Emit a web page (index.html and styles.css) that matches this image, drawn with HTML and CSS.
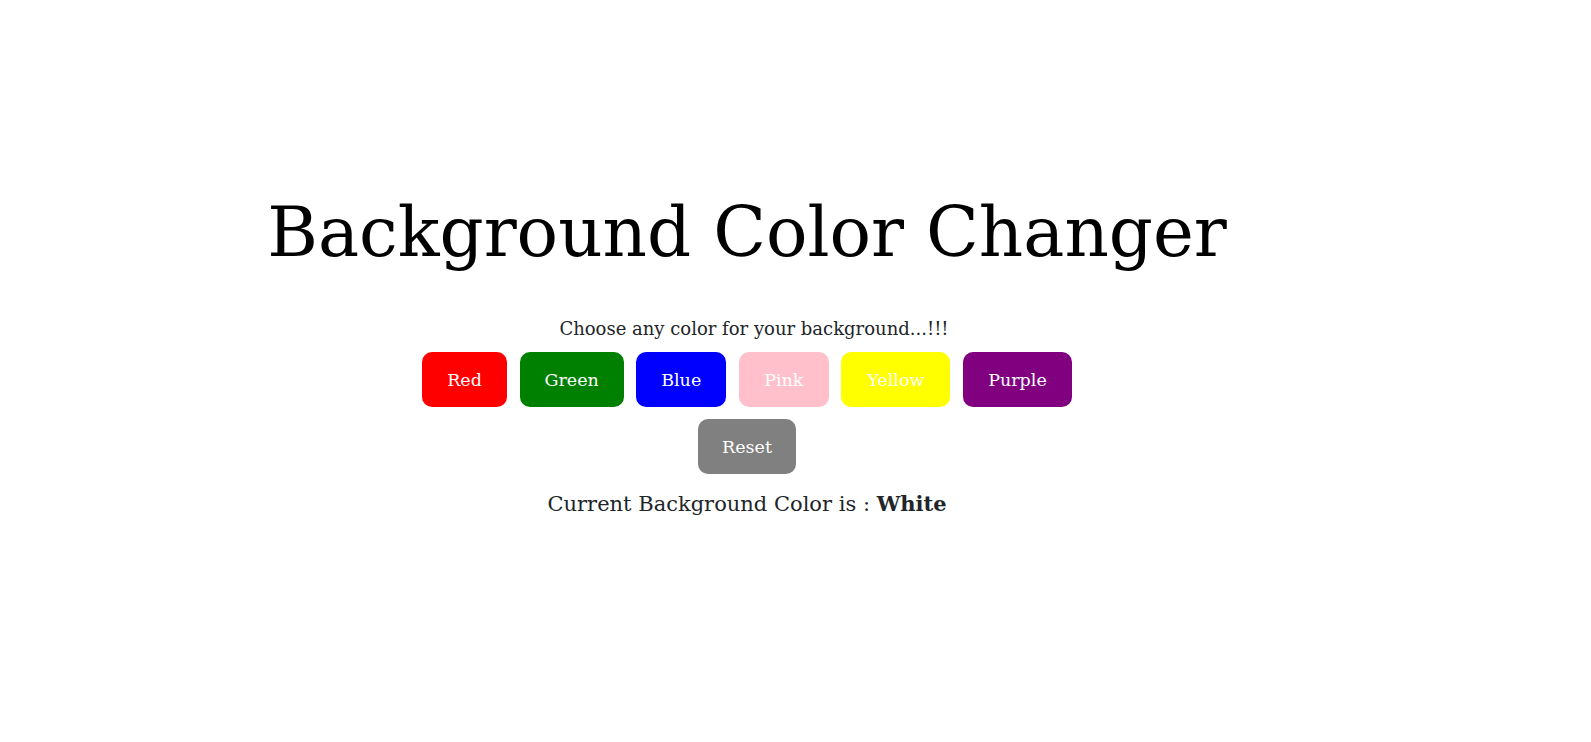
FILE: index.html
```html
<!DOCTYPE html>
<html lang="en">
<head>
<meta charset="utf-8">
<title>Background Color Changer</title>
<link rel="stylesheet" href="styles.css">
</head>
<body>
<main class="page">
  <h1 class="title">Background Color Changer</h1>
  <p class="subtitle">Choose any color for your background...!!!</p>
  <div class="buttons">
    <button class="btn btn-red">Red</button>
    <button class="btn btn-green">Green</button>
    <button class="btn btn-blue">Blue</button>
    <button class="btn btn-pink">Pink</button>
    <button class="btn btn-yellow">Yellow</button>
    <button class="btn btn-purple">Purple</button>
  </div>
  <div class="reset-row">
    <button class="btn btn-reset">Reset</button>
  </div>
  <p class="current">Current Background Color is : <b>White</b></p>
</main>
</body>
</html>
```
FILE: styles.css
```css
html, body {
  margin: 0;
  padding: 0;
  background: #ffffff;
}
body {
  font-family: "DejaVu Serif", "Liberation Serif", serif;
  color: #212529;
}
.page {
  width: 1494px;
  padding-top: 198px;
  display: flex;
  flex-direction: column;
  align-items: center;
  text-align: center;
}
.title {
  margin: 0;
  font-size: 69px;
  font-weight: normal;
  line-height: 69px;
  color: #000;
}
.subtitle {
  margin: 52px 0 0;
  padding-left: 14px;
  font-size: 18px;
  line-height: 20px;
}
.buttons {
  margin-top: 13px;
  display: flex;
  gap: 12.6px;
}
.btn {
  height: 55px;
  padding: 0;
  border: none;
  border-radius: 10px;
  color: #fff;
  font-family: inherit;
  font-size: 17.5px;
  cursor: pointer;
}
.btn-red { width: 85px; background: #ff0000; }
.btn-green { width: 104px; background: #008000; }
.btn-blue { width: 90px; background: #0000ff; }
.btn-pink { width: 90px; background: #ffc0cb; }
.btn-yellow { width: 109px; background: #ffff00; }
.btn-purple { width: 109px; background: #800080; }
.btn-reset { width: 98px; background: #808080; }
.reset-row {
  margin-top: 12px;
  display: flex;
}
.current {
  margin: 18px 0 0;
  font-size: 21px;
  line-height: 24px;
}
.current b {
  font-weight: bold;
}
```
